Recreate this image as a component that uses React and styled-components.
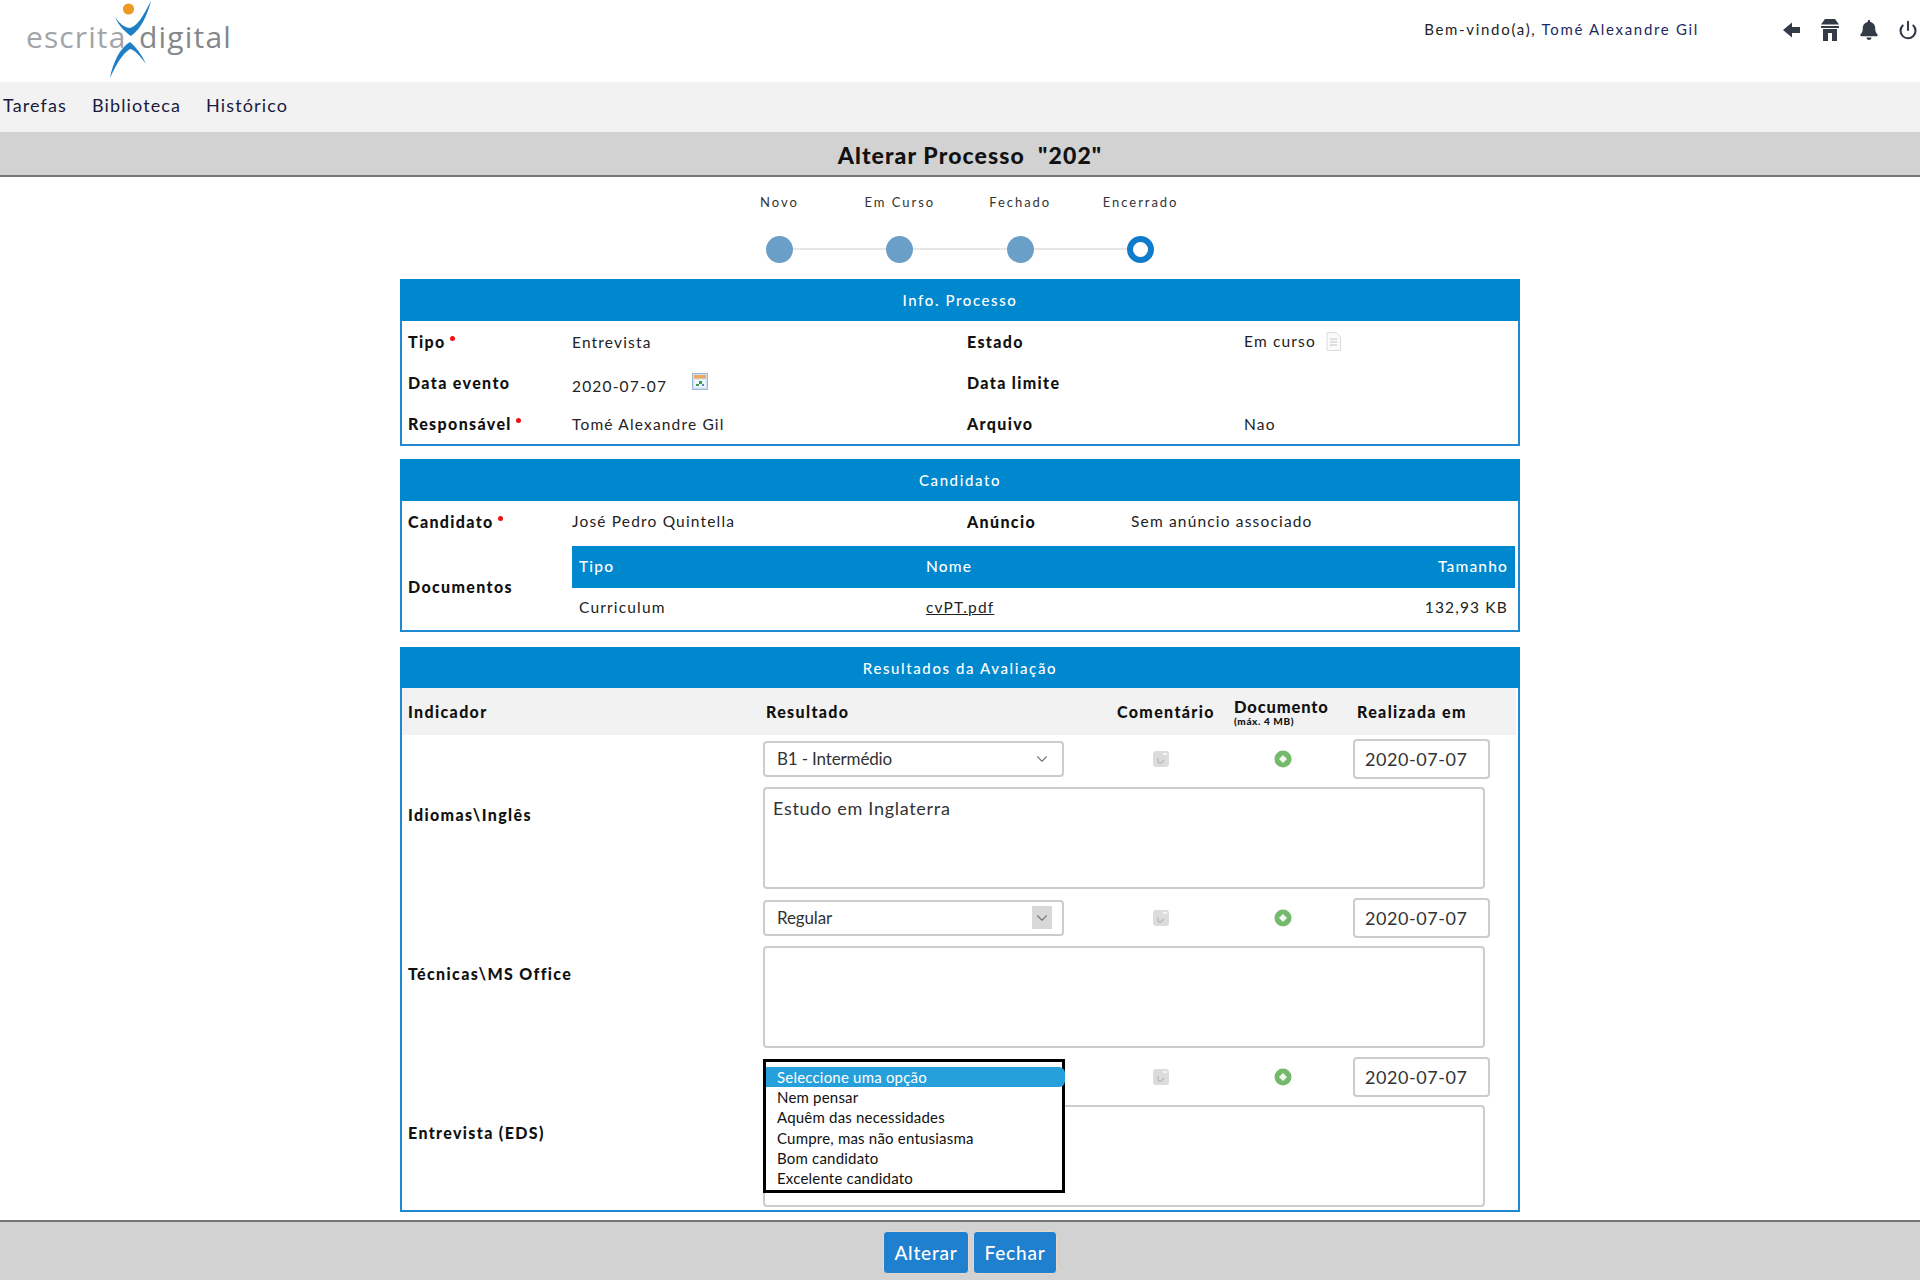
import React from "react";
import styled, { createGlobalStyle } from "styled-components";
import { ChevronDown, Power } from "lucide-react";
import { FaBell } from "react-icons/fa";

const GlobalStyle = createGlobalStyle`
  html, body {
    margin: 0;
    padding: 0;
    background: #fff;
  }
  body {
    font-family: "Lato", "Open Sans", sans-serif;
    color: #222;
  }
  * {
    box-sizing: border-box;
  }
`;

const Page = styled.div`
  display: flex;
  flex-direction: column;
  height: 1280px;
  overflow: hidden;
`;
const TopBar = styled.header`
  display: flex;
  justify-content: space-between;
  align-items: center;
  height: 82px;
  flex-shrink: 0;
`;
const UserArea = styled.div`
  display: flex;
  align-items: center;
  padding-right: 2px;
`;
const Welcome = styled.div`
  font-size: 15px;
  letter-spacing: 1.68px;
  margin-right: 84px;
  padding-bottom: 24px;
`;
const UserName = styled.span`
  color: #1d2a60;
`;
const IconRow = styled.div`
  display: flex;
  align-items: center;
  gap: 19px;
  padding-bottom: 22px;
  color: #333b47;
`;
const Nav = styled.nav`
  display: flex;
  align-items: center;
  gap: 25px;
  height: 50px;
  padding: 0 0 4px 3px;
  background: #f2f2f2;
  flex-shrink: 0;
`;
const NavItem = styled.a`
  font-size: 18px;
  letter-spacing: 1.12px;
  color: #1a1a40;
`;
const TitleBar = styled.div`
  height: 45px;
  background: #d2d2d2;
  border-bottom: 2px solid #777;
  display: flex;
  align-items: center;
  justify-content: center;
  padding: 2px 0 0 20px;
  flex-shrink: 0;
`;
const Title = styled.h1`
  margin: 0;
  font-size: 23px;
  font-weight: 900;
  letter-spacing: 1.1px;
  color: #111;
  white-space: pre;
`;
const Main = styled.main`
  flex: 1;
  width: 1120px;
  margin: 0 auto;
  overflow: hidden;
`;
const Steps = styled.ol`
  display: grid;
  grid-template-columns: repeat(4, 120.4px);
  justify-content: center;
  list-style: none;
  margin: 0;
  padding: 17px 0 0;
  height: 102px;
`;
const Step = styled.li`
  position: relative;
  display: flex;
  flex-direction: column;
  align-items: center;
  gap: 26px;
  font-size: 13px;
  line-height: 16px;
  letter-spacing: 1.95px;
  color: #333;
  &:not(:last-child)::after {
    content: "";
    position: absolute;
    left: 50%;
    top: 54px;
    width: 100%;
    height: 2px;
    background: #e6e6e6;
  }
`;
const StepDot = styled.span`
  position: relative;
  z-index: 1;
  width: 27px;
  height: 27px;
  border-radius: 50%;
  background: ${(props) => (props.$active ? "#fff" : "#6a9fc8")};
  border: ${(props) => (props.$active ? "6px solid #0f7bcb" : "none")};
`;
const Panel = styled.section`
  border: 2px solid #1f88d2;
  border-top: none;
  margin-bottom: ${(props) => props.$gap || 13}px;
`;
const PanelHead = styled.h2`
  margin: 0 -2px;
  height: ${(props) => props.$height || 42}px;
  display: flex;
  align-items: center;
  justify-content: center;
  background: #0088cf;
  color: #fff;
  font-size: 15px;
  font-weight: 500;
  letter-spacing: 1.6px;
`;
const InfoGrid = styled.div`
  display: grid;
  grid-template-columns: 164px 395px 277px 1fr;
  grid-auto-rows: 41px;
  align-items: center;
  padding-left: 6px;
  font-size: 15.5px;
  letter-spacing: 1.17px;
`;
const CandidateGrid = styled.div`
  display: grid;
  grid-template-columns: 164px 395px 164px 1fr;
  grid-template-rows: 40px 84px;
  row-gap: 5px;
  align-items: center;
  padding-left: 6px;
  font-size: 15.5px;
  letter-spacing: 1.17px;
`;
const Label = styled.span`
  font-weight: 900;
  font-size: 16px;
  letter-spacing: 1.35px;
  color: #111;
`;
const DocsLabel = styled(Label)`
  padding-bottom: 3px;
`;
const Value = styled.span`
  display: flex;
  align-items: flex-start;
  gap: ${(props) => props.$gap || 0}px;
`;
const DateText = styled.span`
  padding-top: 7px;
`;
const CalendarSlot = styled.span`
  display: flex;
  padding-top: 3px;
`;
const Required = styled.i`
  display: inline-block;
  width: 5px;
  height: 5px;
  margin-left: 4px;
  border-radius: 50%;
  background: #f01010;
  vertical-align: 7px;
`;
const DocsTable = styled.div`
  grid-column: 2 / 5;
  align-self: start;
  margin-right: 3px;
`;
const DocsRow = styled.div`
  display: grid;
  grid-template-columns: 347px 1fr 160px;
  align-items: center;
  padding: ${(props) => (props.$head ? "0 7px 2px" : "0 7px")};
  height: ${(props) => (props.$head ? 42 : 37)}px;
  background: ${(props) => (props.$head ? "#0088cf" : "#fff")};
  color: ${(props) => (props.$head ? "#fff" : "#222")};
  font-weight: ${(props) => (props.$head ? 500 : 400)};
`;
const RightCell = styled.span`
  text-align: right;
`;
const FileLink = styled.a`
  text-decoration: underline;
  color: #222;
`;
const ColumnHead = styled.div`
  display: grid;
  grid-template-columns: 358px 351px 117px 123px 1fr;
  align-items: center;
  height: 47px;
  padding-left: 6px;
  background: #f2f2f2;
  margin-right: 2px;
  font-weight: 900;
  font-size: 16px;
  letter-spacing: 1.35px;
  color: #111;
`;
const DocHead = styled.span`
  display: flex;
  flex-direction: column;
  align-items: flex-start;
  padding-top: 3px;
  line-height: 15px;
  letter-spacing: 0.85px;
  font-size: 16.5px;
`;
const DocHint = styled.small`
  font-size: 10px;
  line-height: 12px;
  letter-spacing: 0.6px;
`;
const EvalRow = styled.div`
  display: grid;
  grid-template-columns: 361px 301px 194px 50px 45px 137px 1fr;
  grid-template-rows: 40px 102px;
  row-gap: 8px;
  align-items: center;
  padding: 4px 0 5px;
  height: 159px;
  justify-items: start;
  &:last-child {
    height: 157px;
    padding-bottom: 3px;
  }
`;
const IndicatorName = styled(Label)`
  grid-row: 1 / 3;
  padding-left: 6px;
`;
const SelectWrap = styled.div`
  position: relative;
  width: 100%;
`;
const SelectBox = styled.div`
  display: flex;
  align-items: center;
  justify-content: space-between;
  height: 36px;
  padding: 0 12px 1px 12px;
  background: #fff;
  border: 2px solid #ccc;
  border-radius: 4px;
  font-size: 17px;
  letter-spacing: -0.15px;
  color: #333;
`;
const Chevron = styled.span`
  display: flex;
  align-items: center;
  justify-content: center;
  width: 20px;
  height: 23px;
  margin-right: -2px;
  color: #777;
  background: ${(props) => (props.$focus ? "#d8d8d8" : "transparent")};
`;
const OptionList = styled.ul`
  position: absolute;
  z-index: 2;
  top: 0;
  left: 0;
  width: 302px;
  height: 134px;
  margin: 0;
  padding: 5px 0 0 0;
  list-style: none;
  background: #fff;
  border: 3px solid #000;
  font-size: 15px;
  letter-spacing: 0.2px;
  color: #111;
`;
const OptionItem = styled.li`
  height: 20.2px;
  line-height: 20px;
  padding-left: 11px;
  margin-right: ${(props) => (props.$selected ? "-3px" : "0")};
  background: ${(props) => (props.$selected ? "#26a0da" : "transparent")};
  color: ${(props) => (props.$selected ? "#fff" : "#111")};
  border-radius: ${(props) => (props.$selected ? "0 6px 6px 0" : "0")};
`;
const IconCell = styled.div`
  justify-self: center;
  display: flex;
`;
const DateInput = styled.input`
  width: 137px;
  height: 40px;
  padding: 0 10px 1px;
  border: 2px solid #ccc;
  border-radius: 4px;
  font-family: inherit;
  font-size: 18px;
  letter-spacing: 0.55px;
  color: #333;
  outline: none;
`;
const CommentArea = styled.textarea`
  grid-column: 2 / 7;
  width: 722px;
  height: 102px;
  padding: 8px;
  border: 2px solid #ccc;
  border-radius: 4px;
  font-family: inherit;
  font-size: 18px;
  letter-spacing: 0.7px;
  color: #333;
  resize: none;
  outline: none;
`;
const Footer = styled.footer`
  display: flex;
  justify-content: center;
  align-items: flex-start;
  gap: 4px;
  height: 60px;
  padding: 9px 0 0 20px;
  background: #d2d2d2;
  border-top: 2px solid #777;
  flex-shrink: 0;
`;
const ActionButton = styled.button`
  height: 43px;
  padding: 0 8px 1px;
  width: ${(props) => props.$width}px;
  border: 1px solid #e4d8cc;
  border-radius: 4px;
  background: #1f80cf;
  color: #fff;
  font-family: inherit;
  font-size: 19px;
  font-weight: 500;
  letter-spacing: 0.8px;
`;

function Logo() {
  return (
    <svg width="240" height="82" viewBox="0 0 240 82">
      <text x="26" y="48" fontFamily="'Open Sans', sans-serif" fontSize="30" letterSpacing="1.1" fill="#a2a5a8">escrita</text>
      <text x="139" y="48" fontFamily="'Open Sans', sans-serif" fontSize="30" letterSpacing="1.2" fill="#84888c">digital</text>
      <circle cx="128.5" cy="9" r="5.6" fill="#ee9a22" />
      <path d="M115 17C120 24 125 28 130 28C138 26 144 14 151 1C147 16 141 29 131 36C125 32 119 26 115 17Z" fill="#1f7fc4" />
      <path d="M110 78C113 62 120 48 130 42C136 47 142 55 146 64C140 56 135 50 130 49C122 54 116 65 110 78Z" fill="#1f7fc4" />
    </svg>
  );
}

function BackIcon() {
  return (
    <svg width="18" height="18" viewBox="0 0 18 18" fill="currentColor">
      <path d="M0 9L9 1.5V6H17V12H9V16.500Z" />
    </svg>
  );
}

function HomeIcon() {
  return (
    <svg width="20" height="24" viewBox="0 0 20 24" fill="currentColor">
      <path d="M5 1H15L19 6.500H1Z" />
      <path d="M1 8H19V10H1Z" />
      <path d="M3 11H17V23H12V15H8V23H3Z" />
    </svg>
  );
}

function CalendarIcon() {
  return (
    <svg width="16" height="17" viewBox="0 0 16 17">
      <rect x="0.500" y="0.500" width="15" height="16" fill="#cfe0f2" stroke="#9db9d6" />
      <rect x="2" y="2" width="12" height="3.500" fill="#f0a860" />
      <rect x="2" y="6.500" width="12" height="8" fill="#eef4fb" />
      <rect x="7" y="8" width="3" height="3" fill="#3a9a50" />
      <rect x="4" y="11" width="3" height="2" fill="#3a9a50" />
      <rect x="10" y="11" width="2" height="2" fill="#5b86b8" />
    </svg>
  );
}

function NoteIcon() {
  return (
    <svg width="15" height="19" viewBox="0 0 15 19">
      <path d="M1 .5H10L14.500 5V18.500H1Z" fill="#fafafa" stroke="#dcdcdc" />
      <path d="M4 7H11M4 10H11M4 13H11" stroke="#c4c4c4" />
    </svg>
  );
}

function CommentIcon() {
  return (
    <svg width="16" height="16" viewBox="0 0 16 16">
      <rect width="16" height="16" rx="3" fill="#dcdcdc" />
      <path d="M5 7V10.500C5 12 6.500 12.500 8 12L11 9" stroke="#bdbdbd" strokeWidth="1.500" fill="none" />
      <rect x="10" y="2" width="4" height="2" fill="#f4f4f4" />
    </svg>
  );
}

function AddIcon() {
  return (
    <svg width="18" height="18" viewBox="0 0 18 18">
      <circle cx="9" cy="9" r="8.500" fill="#74b96c" />
      <path d="M9 5L13 9L9 13L5 9Z" fill="#f2f8f0" />
    </svg>
  );
}

function EvalLine({ name, value, focus, comment, options }) {
  return (
    <EvalRow>
      <IndicatorName>{name}</IndicatorName>
      <SelectWrap>
        <SelectBox>
          <span>{value}</span>
          <Chevron $focus={focus}><ChevronDown size={18} strokeWidth={1.5} /></Chevron>
        </SelectBox>
        {options && (
          <OptionList>
            {options.map((option, index) => (
              <OptionItem key={option} $selected={index === 0}>{option}</OptionItem>
            ))}
          </OptionList>
        )}
      </SelectWrap>
      <IconCell><CommentIcon /></IconCell>
      <IconCell><AddIcon /></IconCell>
      <span />
      <DateInput readOnly value="2020-07-07" />
      <span />
      <CommentArea readOnly value={comment || ""} />
    </EvalRow>
  );
}

const resultOptions = [
  "Seleccione uma opção",
  "Nem pensar",
  "Aquêm das necessidades",
  "Cumpre, mas não entusiasma",
  "Bom candidato",
  "Excelente candidato",
];

export default function App() {
  return (
    <Page>
      <GlobalStyle />
      <TopBar>
        <Logo />
        <UserArea>
          <Welcome>Bem-vindo(a), <UserName>Tomé Alexandre Gil</UserName></Welcome>
          <IconRow>
            <BackIcon />
            <HomeIcon />
            <FaBell size={20} />
            <Power size={20} strokeWidth={2.5} />
          </IconRow>
        </UserArea>
      </TopBar>
      <Nav>
        <NavItem>Tarefas</NavItem>
        <NavItem>Biblioteca</NavItem>
        <NavItem>Histórico</NavItem>
      </Nav>
      <TitleBar>
        <Title>Alterar Processo  "202"</Title>
      </TitleBar>
      <Main>
        <Steps>
          <Step>Novo<StepDot /></Step>
          <Step>Em Curso<StepDot /></Step>
          <Step>Fechado<StepDot /></Step>
          <Step>Encerrado<StepDot $active /></Step>
        </Steps>
        <Panel>
          <PanelHead>Info. Processo</PanelHead>
          <InfoGrid>
            <Label>Tipo<Required /></Label>
            <Value>Entrevista</Value>
            <Label>Estado</Label>
            <Value $gap={10}>Em curso <NoteIcon /></Value>
            <Label>Data evento</Label>
            <Value $gap={25}><DateText>2020-07-07</DateText> <CalendarSlot><CalendarIcon /></CalendarSlot></Value>
            <Label>Data limite</Label>
            <span />
            <Label>Responsável<Required /></Label>
            <Value>Tomé Alexandre Gil</Value>
            <Label>Arquivo</Label>
            <Value>Nao</Value>
          </InfoGrid>
        </Panel>
        <Panel $gap={15}>
          <PanelHead>Candidato</PanelHead>
          <CandidateGrid>
            <Label>Candidato<Required /></Label>
            <Value>José Pedro Quintella</Value>
            <Label>Anúncio</Label>
            <Value>Sem anúncio associado</Value>
            <DocsLabel>Documentos</DocsLabel>
            <DocsTable>
              <DocsRow $head>
                <span>Tipo</span>
                <span>Nome</span>
                <RightCell>Tamanho</RightCell>
              </DocsRow>
              <DocsRow>
                <span>Curriculum</span>
                <span><FileLink>cvPT.pdf</FileLink></span>
                <RightCell>132,93 KB</RightCell>
              </DocsRow>
            </DocsTable>
          </CandidateGrid>
        </Panel>
        <Panel>
          <PanelHead $height={41}>Resultados da Avaliação</PanelHead>
          <ColumnHead>
            <span>Indicador</span>
            <span>Resultado</span>
            <span>Comentário</span>
            <DocHead>Documento<DocHint>(máx. 4 MB)</DocHint></DocHead>
            <span>Realizada em</span>
          </ColumnHead>
          <EvalLine name="Idiomas\Inglês" value="B1 - Intermédio" comment="Estudo em Inglaterra" />
          <EvalLine name="Técnicas\MS Office" value="Regular" focus />
          <EvalLine name="Entrevista (EDS)" options={resultOptions} />
        </Panel>
      </Main>
      <Footer>
        <ActionButton $width={86}>Alterar</ActionButton>
        <ActionButton $width={84}>Fechar</ActionButton>
      </Footer>
    </Page>
  );
}
